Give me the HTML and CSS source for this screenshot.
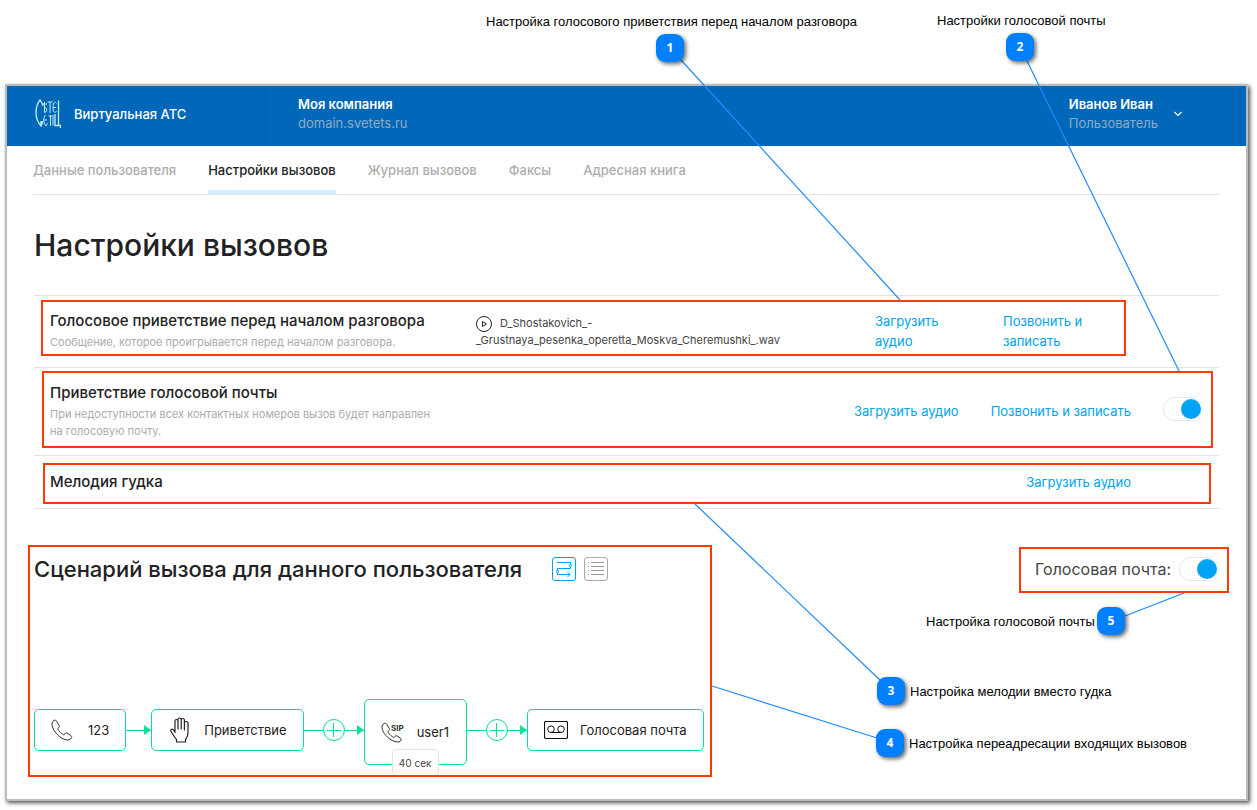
FILE: index.html
```html
<!DOCTYPE html>
<html lang="ru">
<head>
<meta charset="utf-8">
<title>Настройки вызовов</title>
<link rel="stylesheet" href="styles.css">
</head>
<body>
<div class="stage">
  <div class="window">
    <header class="header">
      <div class="brand">
        <svg class="logo" width="26" height="30" viewBox="0 0 26 30" fill="none" stroke="#c5ecfa">
          <path stroke-width="1.300" d="M8 7C7 4 6 2 5 1C2.500 4 1 9 1 14s1.500 9 5 13c.8-1.500 1.500-3 1.500-5M6 27v-5"/>
          <path d="M9.500 3v10.500M8 5h4M9.500 8.500c3-.5 3 5 0 5M10.500 16c-2.500 2-2.500 8 .5 11c.8-1 1.300-2 1.300-3M9 21h3"/>
          <path d="M12.500 3h5M15 3v11M15.500 16v11M13.500 17h3.500"/>
          <path d="M21.500 4.500c-2.500-3-3.500 0-3.500 4s1 6 3.500 4M18 8.500h3M18 16v10.500"/>
          <path stroke-width="1.300" d="M23.500 1.500V26M20 15v11.500h5.500V29"/>
        </svg>
        <span class="brand-name">Виртуальная АТС</span>
      </div>
      <div class="company">
        <div class="head-main">Моя компания</div>
        <div class="head-sub">domain.svetets.ru</div>
      </div>
      <button class="user" type="button">
        <span>
          <span class="head-main">Иванов Иван</span>
          <span class="head-sub">Пользователь</span>
        </span>
        <svg width="8" height="6" viewBox="0 0 8 6" fill="none" stroke="#fff" stroke-width="1.200"><path d="M0.500 1L4 4.500L7.500 1"/></svg>
      </button>
    </header>
    <nav class="tabs">
      <a href="#">Данные пользователя</a>
      <a href="#" class="active">Настройки вызовов</a>
      <a href="#">Журнал вызовов</a>
      <a href="#">Факсы</a>
      <a href="#">Адресная книга</a>
    </nav>
    <main class="main">
      <h1>Настройки вызовов</h1>
      <section class="rows">
        <div class="row row-greeting">
          <div class="row-text">
            <h3>Голосовое приветствие перед началом разговора</h3>
            <p>Сообщение, которое проигрывается перед началом разговора.</p>
          </div>
          <div class="file">
            <button class="play" type="button" aria-label="Воспроизвести"><svg width="16" height="16" viewBox="0 0 16 16" fill="none" stroke="#222"><circle cx="8" cy="8" r="7.500"/><path d="M6.500 5.500v5L10.500 8z"/></svg></button>D_Shostakovich_-<br>_Grustnaya_pesenka_operetta_Moskva_Cheremushki_.wav
          </div>
          <div class="links">
            <a href="#">Загрузить аудио</a>
            <a href="#">Позвонить и записать</a>
          </div>
        </div>
        <div class="row row-mail">
          <div class="row-text">
            <h3>Приветствие голосовой почты</h3>
            <p>При недоступности всех контактных номеров вызов будет направлен на голосовую почту.</p>
          </div>
          <div class="links">
            <a href="#">Загрузить аудио</a>
            <a href="#">Позвонить и записать</a>
          </div>
          <input class="toggle" type="checkbox" checked aria-label="Приветствие голосовой почты">
        </div>
        <div class="row row-tone">
          <div class="row-text"><h3>Мелодия гудка</h3></div>
          <div class="links"><a href="#">Загрузить аудио</a></div>
        </div>
      </section>
      <section class="scenario">
        <div class="scenario-head">
          <h2>Сценарий вызова для данного пользователя</h2>
          <button class="view on" type="button" aria-label="Схема"><svg width="16" height="16" viewBox="0 0 16 16" fill="none" stroke="currentColor"><path d="M1 1.500h13.500v2M14.500 6v1.500H1.500v2M1.500 12v1.500H14M11.500 11l2.500 2.500l-2.500 2.500"/><circle cx="14.500" cy="4.500" r="1.200"/><circle cx="1.500" cy="10.500" r="1.200"/></svg></button>
          <button class="view" type="button" aria-label="Список"><svg width="16" height="16" viewBox="0 0 16 16" fill="none" stroke="currentColor"><path d="M3 1.500h13M3 5.500h13M3 9.500h13M3 13.500h13M0 1.500h1M0 5.500h1M0 9.500h1M0 13.500h1"/></svg></button>
          <label class="mail-switch">Голосовая почта: <input class="toggle" type="checkbox" checked></label>
        </div>
        <div class="flow">
          <div class="node node-phone">
            <svg width="22" height="22" viewBox="0 0 22 22" fill="none" stroke="#333" stroke-linejoin="round"><path d="M3 1.500C1 2.500.5 5 1.500 8C3.500 13.500 8.500 19 14 20.500c3 1 5.500.5 6.500-2c.4-1 0-1.500-.6-2L16 14.200c-.8-.5-1.500-.4-2 .3l-1 1.300c-1 .4-6-4.300-6.300-6L8 8.500c.6-.6.600-1.200.2-2L5.500 2C5 1 4 1 3 1.500z"/></svg>
            <span>123</span>
          </div>
          <div class="arrow"></div>
          <div class="node node-hand">
            <svg width="24" height="26" viewBox="-2 0 24 26" fill="none" stroke="#222" stroke-width="1.200" stroke-linejoin="round"><path d="M5 14V4c0-2 3-2 3 0v8V2.500c0-2 3.200-2 3.200 0v9.500V3c0-2 3.200-2 3.200 0v10V6c0-2 3.600-2 3.600 0v10c0 3-1.500 5-2.500 6.500V25H6.500v-2.500C4.500 20 3 17.500 1 14.500c-1-1.500.5-3 2-2L5 14.500M5 11v5"/></svg>
            <span>Приветствие</span>
          </div>
          <div class="arrow arrow-long"><button type="button" class="plus" aria-label="Добавить"></button></div>
          <div class="node node-user">
            <svg width="24" height="22" viewBox="0 0 24 22" fill="none" stroke="#333" stroke-linejoin="round"><path d="M3 2.500C1 3.500.5 6 1.500 9C3.500 14 8.500 19 14 20.500c3 1 5.500.5 6-1.500c.4-1 0-1.500-.6-2L16 15c-.8-.5-1.500-.4-2 .3l-1 1.100c-1 .4-5.800-4.100-6.100-5.800L8 9.300c.6-.6.600-1.200.2-2L5.500 3C5 2 4 2 3 2.500z"/><text class="sip" x="10" y="10">SIP</text></svg>
            <span>user1</span>
            <span class="delay">40 сек</span>
          </div>
          <div class="arrow arrow-long"><button type="button" class="plus" aria-label="Добавить"></button></div>
          <div class="node node-mail">
            <svg width="24" height="18" viewBox="0 0 24 18" fill="none" stroke="#111"><rect x=".5" y=".5" width="23" height="17" rx="1.500" stroke-width="1.200"/><circle cx="7" cy="8.200" r="3.300"/><circle cx="17" cy="8.200" r="3.300"/><path d="M7 11.500h10"/></svg>
            <span>Голосовая почта</span>
          </div>
        </div>
      </section>
    </main>
  </div>

  <div class="notes">
    <div class="frame f1"></div>
    <div class="frame f2"></div>
    <div class="frame f3"></div>
    <div class="frame f4"></div>
    <div class="frame f5"></div>
    <svg class="wires" width="1257" height="810" fill="none" stroke="#1e8cff" stroke-width="1.200"><path d="M681 60L900 300M1027 61L1179 371M695 504L881 681M712 686L877 738M1125 616L1184 593"/></svg>
    <div class="note n1">Настройка голосового приветствия перед началом разговора</div>
    <div class="note n2">Настройки голосовой почты</div>
    <div class="note n3">Настройка мелодии вместо гудка</div>
    <div class="note n4">Настройка переадресации входящих вызовов</div>
    <div class="note n5">Настройка голосовой почты</div>
    <div class="pin p1">1</div>
    <div class="pin p2">2</div>
    <div class="pin p3">3</div>
    <div class="pin p4">4</div>
    <div class="pin p5">5</div>
  </div>
</div>
</body>
</html>
```
FILE: styles.css
```css
* { box-sizing: border-box; }
body { margin: 0; background: #fff; color: #222; font-family: Inter, "Noto Sans", sans-serif; font-size: 13px; }
h1, h2, h3, p { margin: 0; }
h1, h2, h3 { font-weight: 500; }
a { text-decoration: none; }
button { font: inherit; padding: 0; background: none; border: 0; }

.stage { position: relative; min-height: 100vh; padding: 84px 9px 9px 5px; display: flex; }
.window { flex: 1; border: 2px solid #bcbcbc; background: #fff; box-shadow: 2px 2px 4px #555; }

.header { display: flex; height: 60px; background: #0067b9; color: #fff; }
.brand { display: flex; align-items: center; gap: 13px; width: 259px; padding: 0 0 5px 28px; border-right: 1px solid #005da9; }
.logo { flex: none; }
.brand-name { font-weight: 500; }
.company { flex: 1; padding: 9px 0 0 32px; }
.head-main { display: block; font-weight: 600; line-height: 19px; }
.head-sub { display: block; line-height: 19px; color: #8fabc4; }
.user { display: flex; gap: 16px; align-items: center; color: #fff; text-align: left; padding: 0 64px 4px 0; }

.tabs { display: flex; gap: 32px; margin: 0 27px 0 26px; height: 49px; border-bottom: 1px solid #e3e3e3; }
.tabs a { line-height: 48px; height: 48px; color: #adadad; font-weight: 500; }
.tabs .active { color: #222; border-bottom: 4px solid #d4effc; }

.main { padding: 0 27px; }
h1 { padding: 30px 0; font-size: 30px; line-height: 40px; }
.rows { border-top: 1px solid #e3e3e3; }
.row { display: flex; align-items: flex-start; padding: 0 16px; border-bottom: 1px solid #e3e3e3; }
.row-text { width: 394px; }
h3 { font-size: 15px; line-height: 20px; }
.row p { margin-top: 3px; font-size: 11px; line-height: 17px; color: #ababab; }
.row-greeting { height: 72px; padding-top: 15px; }
.file { flex: 1; margin-left: 32px; font-size: 11px; line-height: 17px; color: #444; padding-top: 4px; }
.play { vertical-align: middle; height: 16px; margin-right: 8px; }
.play svg { display: block; }
.links { display: flex; gap: 32px; line-height: 20px; }
.links a { color: #00a4f0; }
.row-greeting .links { width: 328px; }
.row-greeting .links a { width: 96px; }
.row-mail { height: 88px; padding-top: 15px; }
.row-mail .links { margin: 18px 32px 0 auto; }
.row-tone { height: 53px; padding-top: 16px; }
.row-tone .links { margin: 0 72px 0 auto; }

.toggle { appearance: none; width: 40px; height: 24px; margin: 0; border: 1px solid #e6e6e6; border-radius: 12px; background: #fff; display: flex; justify-content: flex-end; align-items: center; }
.toggle::before { content: ""; width: 20px; height: 20px; margin-right: 1px; border-radius: 50%; background: #00a2f5; }
.row-mail .toggle { margin-top: 14px; }

.scenario-head { display: flex; align-items: center; gap: 8px; padding-top: 44px; }
h2 { font-size: 22px; line-height: 32px; margin-right: 22px; }
.view { width: 24px; height: 24px; border: 1px solid #aaa; border-radius: 3px; color: #999; display: flex; align-items: center; justify-content: center; }
.view.on { border-color: #00a2f5; color: #00a2f5; }
.mail-switch { display: flex; align-items: center; gap: 8px; margin-left: auto; font-size: 16px; color: #444; }

.flow { display: flex; align-items: center; padding-top: 110px; }
.node { display: flex; align-items: center; gap: 12px; height: 42px; padding: 0 16px; border: 1px solid #0cdf98; border-radius: 5px; }
.node svg { flex: none; }
.node-phone { gap: 15px; }
.node-user { position: relative; height: 66px; margin-top: 4px; padding-right: 17px; }
.delay { position: absolute; left: 27px; bottom: -12px; width: 47px; height: 27px; line-height: 26px; text-align: center; font-size: 10px; color: #444; background: #fff; border: 1px solid #e3e3e3; border-radius: 4px; }
.sip { font: 700 8px Inter, sans-serif; fill: #333; stroke: none; }
.arrow { width: 25px; height: 1px; background: #0cdf98; display: flex; align-items: center; justify-content: flex-end; }
.arrow::after { content: ""; flex: none; border-left: 7px solid #0cdf98; border-top: 5px solid transparent; border-bottom: 5px solid transparent; }
.arrow-long { width: 60px; }
.plus { width: 22px; height: 22px; flex: none; margin-right: 12px; border: 1px solid #0cdf98; border-radius: 50%; background: linear-gradient(#0cdf98, #0cdf98) center / 14px 1px no-repeat, linear-gradient(#0cdf98, #0cdf98) center / 1px 14px no-repeat, #fff; }

.notes { position: absolute; inset: 0; pointer-events: none; }
.wires { position: absolute; left: 0; top: 0; }
.frame { position: absolute; border: 2px solid #ff3a05; }
.f1 { left: 41px; top: 300px; width: 1085px; height: 56px; }
.f2 { left: 42px; top: 371px; width: 1171px; height: 77px; }
.f3 { left: 43px; top: 463px; width: 1168px; height: 41px; }
.f4 { left: 28px; top: 545px; width: 684px; height: 232px; }
.f5 { left: 1019px; top: 547px; width: 210px; height: 46px; }
.note { position: absolute; font: 13px/16px "Liberation Sans", Arial, sans-serif; color: #000; white-space: nowrap; }
.n1 { left: 486px; top: 14px; }
.n2 { left: 937px; top: 13px; }
.n3 { left: 910px; top: 684px; }
.n4 { left: 909px; top: 736px; }
.n5 { left: 926px; top: 614px; }
.pin { position: absolute; width: 28px; height: 28px; border-radius: 9px; background: #0080ff; color: #fff; font: 700 12px/28px "Open Sans", sans-serif; text-align: center; box-shadow: 2px 2px 4px rgba(0, 0, 0, .6); }
.p1 { left: 656px; top: 34px; }
.p2 { left: 1006px; top: 33px; }
.p3 { left: 877px; top: 677px; }
.p4 { left: 876px; top: 729px; }
.p5 { left: 1097px; top: 607px; }
```
